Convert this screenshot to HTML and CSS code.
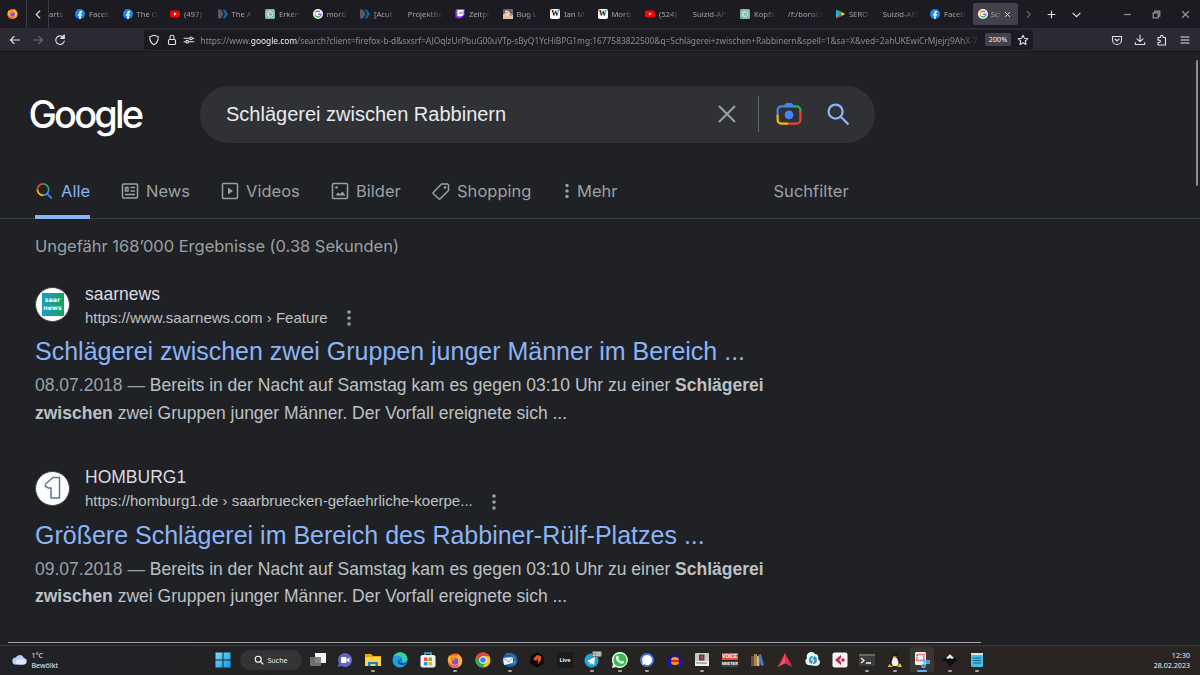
FILE: index.html
```html
<!DOCTYPE html>
<html lang="de">
<head>
<meta charset="utf-8">
<title>Schlägerei zwischen Rabbinern - Google Suche</title>
<link rel="stylesheet" href="styles.css">
</head>
<body>
<svg class="defs" aria-hidden="true">
  <symbol id="fb" viewBox="0 0 20 20"><circle cx="10" cy="10" r="10" fill="#168af5"/><path d="M8.500 20v-7H6v-3h2.500V8c0-2.700 1.500-4 3.800-4l2 .2v2.600h-1.300c-1.200 0-1.500.7-1.500 1.500V10h2.800l-.5 3h-2.300v7z" fill="#fff"/></symbol>
  <symbol id="yt" viewBox="0 0 20 20"><rect y="3" width="20" height="14" rx="4" fill="#f00"/><path d="M8 7l5.500 3L8 13z" fill="#fff"/></symbol>
  <symbol id="dbl" viewBox="0 0 20 20"><path d="M0 1h6l5 9-5 9H0z" fill="#565b66"/><path d="M9 1h5l6 9-6 9H9l5-9z" fill="#17619f"/></symbol>
  <symbol id="gpt" viewBox="0 0 20 20"><rect width="20" height="20" rx="3" fill="#84b8a8"/><g fill="none" stroke="#d4e8e1" stroke-width="1"><circle cx="10" cy="10" r="6"/><path d="M5 7l5-3 5 3v6l-5 3-5-3zM7 5v6l6 4M13 5L7 9v6M15 9l-5-3"/></g></symbol>
  <symbol id="goog" viewBox="0 0 20 20"><circle cx="10" cy="10" r="10" fill="#fff"/><g fill="none" stroke-width="2.600"><path d="M14.300 6A6 6 0 0 0 4.800 7" stroke="#ea4335"/><path d="M4.800 7a6 6 0 0 0 0 6" stroke="#fbbc05"/><path d="M4.800 13a6 6 0 0 0 9 1.600" stroke="#34a853"/><path d="M13.800 14.600A6 6 0 0 0 16 10.500H10" stroke="#4285f4"/></g></symbol>
  <symbol id="twitch" viewBox="0 0 20 20"><path d="M3 0h16v12l-6 6H9l-3 2v-3H1V4z" fill="#8b45f6"/><path d="M5 2h12v9l-3 3h-4l-2 2v-2H5z" fill="#fff"/><path d="M9 5h2v5H9zM13 5h2v5h-2z" fill="#8b45f6"/></symbol>
  <symbol id="bug" viewBox="0 0 20 20"><rect width="20" height="20" rx="2" fill="#71617b"/><path d="M0 11l7-4 13 5v8H0z" fill="#e0c0a7"/><path d="M4 4l5-1 5 4-2 8-7-2z" fill="#f0d5b1"/><path d="M6 7h3M13 13h4" stroke="#8c6f7c" stroke-width="1.500"/></symbol>
  <symbol id="play" viewBox="0 0 20 20"><path d="M2 1v18l9-9z" fill="#19b6f1"/><path d="M2 1l9 9 4-3.500z" fill="#31b85b"/><path d="M2 19l9-9 4 3.500z" fill="#eb4639"/><path d="M15 6.500L11 10l4 3.500 5-3.500z" fill="#fbc52d"/></symbol>
  <symbol id="ffox" viewBox="0 0 20 20"><circle cx="10" cy="11" r="9" fill="#ff6b26"/><path d="M12 0c0 3 7 4 7 11a9 9 0 0 1-18 0c0-4 1-5 2-7l2 2c2-2 5-1 5 0 3 0 4-3 2-6z" fill="#ffb52b"/><path d="M1 9c0 4 2 4 3 6 3 3 8 3 11 0-1 3-4 5-7 4-4-1-7-4-7-10z" fill="#f2315f"/><circle cx="10" cy="11.500" r="4.300" fill="#7854dc"/><path d="M4 7c3-1 5 0 7 2-2 1-3 1-4 3-2-1-3-3-3-5z" fill="#ff7c25"/></symbol>
</svg>

<div class="tabstrip">
  <div class="pinned"><svg><use href="#ffox"/></svg></div>
  <div class="scroll-left"><svg viewBox="0 0 10 10"><path d="M6.500 1.500L3 5l3.500 3.500" /></svg></div>
  <div class="tab cut"><span>arts</span></div>
  <div class="tab"><svg class="fav"><use href="#fb"/></svg><span>Faceb</span></div>
  <div class="tab"><svg class="fav"><use href="#fb"/></svg><span>The O</span></div>
  <div class="tab"><svg class="fav"><use href="#yt"/></svg><span>(497)</span></div>
  <div class="tab"><svg class="fav"><use href="#dbl"/></svg><span>The A</span></div>
  <div class="tab"><svg class="fav"><use href="#gpt"/></svg><span>Erken</span></div>
  <div class="tab"><svg class="fav"><use href="#goog"/></svg><span>morb</span></div>
  <div class="tab"><svg class="fav"><use href="#dbl"/></svg><span>[Acut</span></div>
  <div class="tab"><span>ProjektBe</span></div>
  <div class="tab"><svg class="fav"><use href="#twitch"/></svg><span>Zeitpl</span></div>
  <div class="tab"><svg class="fav"><use href="#bug"/></svg><span>Bug L</span></div>
  <div class="tab"><i class="wiki">W</i><span>Ian M</span></div>
  <div class="tab"><i class="wiki">W</i><span>Morb</span></div>
  <div class="tab"><svg class="fav"><use href="#yt"/></svg><span>(524)</span></div>
  <div class="tab"><span>Suizid-API</span></div>
  <div class="tab"><svg class="fav"><use href="#gpt"/></svg><span>Kopfs</span></div>
  <div class="tab"><span>/f:/bonsi.t</span></div>
  <div class="tab"><svg class="fav"><use href="#play"/></svg><span>SERO</span></div>
  <div class="tab"><span>Suizid-API</span></div>
  <div class="tab"><svg class="fav"><use href="#fb"/></svg><span>Faceb</span></div>
  <div class="tab active"><svg class="fav"><use href="#goog"/></svg><span>Sch</span><svg class="close" viewBox="0 0 6 6"><path d="M1 1l4 4M5 1L1 5"/></svg></div>
  <div class="tabtools">
    <svg class="dim" viewBox="0 0 10 10"><path d="M3.500 2L6.500 5l-3 3"/></svg>
    <svg viewBox="0 0 10 10"><path d="M5 1.500v7M1.500 5h7"/></svg>
    <svg viewBox="0 0 10 10"><path d="M1.500 3.500L5 7l3.500-3.500"/></svg>
  </div>
  <div class="wincontrols">
    <svg viewBox="0 0 10 10"><path d="M2 5h6"/></svg>
    <svg viewBox="0 0 10 10"><path d="M2 3.500h4.500V8H2zM3.500 3.500V2H8v4.500H6.500"/></svg>
    <svg viewBox="0 0 10 10"><path d="M2 2l6 6M8 2L2 8"/></svg>
  </div>
</div>

<div class="toolbar">
  <div class="navbuttons">
    <svg viewBox="0 0 12 12"><path d="M10.500 6h-9M5 2.500L1.500 6 5 9.500"/></svg>
    <svg class="dim" viewBox="0 0 12 12"><path d="M1.500 6h9M7 2.500L10.500 6 7 9.500"/></svg>
    <svg viewBox="0 0 12 12"><path d="M9.300 3.300A4.300 4.300 0 1 0 10.300 7M10.300 1v3.500H6.800z"/></svg>
  </div>
  <div class="urlbar">
    <svg viewBox="0 0 12 12"><path d="M6 1.300l4.300 1.500c0 4-1.200 6.500-4.300 8C2.900 9.300 1.700 6.800 1.700 2.800z"/></svg>
    <svg viewBox="0 0 12 12"><rect x="2.500" y="5.500" width="7" height="5" rx="1"/><path d="M4 5.500V3.300a2 2 0 0 1 4 0v2.200"/></svg>
    <svg class="perm" viewBox="0 0 12 12"><path d="M1 4.300h5M9.500 4.300H11M1 7.700h1.500M6 7.700h5"/><circle cx="8" cy="4.300" r="1.300"/><circle cx="4.200" cy="7.700" r="1.300"/></svg>
    <div class="url">https://www.<b>google.com</b>/search?client=firefox-b-d&amp;sxsrf=AJOqlzUrPbuG00uVTp-sByQ1YcHiBPG1mg:1677583822500&amp;q=Schlägerei+zwischen+Rabbinern&amp;spell=1&amp;sa=X&amp;ved=2ahUKEwiCrMjejrj9AhX-7</div>
    <span class="zoomlevel">200%</span>
    <svg viewBox="0 0 12 12"><path d="M6 1.200l1.400 3.100 3.500.4-2.600 2.300.7 3.400-3-1.700-3 1.700.7-3.400L1.100 4.700l3.500-.4z"/></svg>
  </div>
  <div class="actions">
    <svg viewBox="0 0 12 12"><path d="M1.500 2.500h9V6a4.500 4.500 0 0 1-9 0zM4 5l2 2 2-2"/></svg>
    <svg viewBox="0 0 12 12"><path d="M6 1v6.500M3 4.800l3 2.900 3-2.900M1.300 8.500v2h9.400v-2"/></svg>
    <svg viewBox="0 0 12 12"><path d="M2 3.500h2.500V2.700a1.300 1.300 0 0 1 2.600 0v.8H9.500V11H2V8.500h1.200a1.200 1.200 0 0 0 0-2.400H2z"/></svg>
    <svg viewBox="0 0 12 12"><path d="M2 3h8M2 6h8M2 9h8"/></svg>
  </div>
</div>

<main class="page">
  <header class="head">
    <div class="logo">Google</div>
    <div class="searchbox">
      <div class="query">Schlägerei zwischen Rabbinern</div>
      <svg class="clear" viewBox="0 0 18 18"><path d="M1 1l16 16M17 1L1 17"/></svg>
      <i class="sep"></i>
      <svg class="lens" viewBox="0 0 26 24" fill="none" stroke-width="2.200"><path d="M8.500 4.200l1.500-2.600h6l1.500 2.600z" fill="#4285f4" stroke="#4285f4" stroke-width="1"/><path d="M1.600 12.500V8a3.600 3.600 0 0 1 3.600-3.600H19" stroke="#4285f4"/><path d="M18 4.400h2.800A3.600 3.600 0 0 1 24.400 8v2" stroke="#34a853"/><path d="M24.400 9v9a3.600 3.600 0 0 1-3.600 3.600H12" stroke="#ea4335"/><path d="M12 21.600H5.200A3.600 3.600 0 0 1 1.600 18v-5.500" stroke="#fbbc04"/><circle cx="13" cy="12.800" r="4.400" fill="#4285f4"/></svg>
      <svg class="glass" viewBox="0 0 23 23"><circle cx="8.600" cy="8.600" r="7"/><path d="M13.500 13.500l8 8"/></svg>
    </div>
  </header>

  <nav class="modes">
    <a class="mode on"><svg viewBox="0 0 18 18"><path d="M2.500 4.200A6 6 0 0 1 7.500 1.500" stroke="#ea4335"/><path d="M7.500 1.500a6 6 0 0 1 6 6" stroke="#34a853"/><path d="M3 3.600a6 6 0 0 0-1.500 3.900" stroke="#ea4335"/><path d="M1.500 7.500a6 6 0 0 0 6 6" stroke="#fbbc04"/><path d="M7.500 13.500a6 6 0 0 0 6-6M11.700 11.700l5 5" stroke="#4285f4"/></svg><span>Alle</span></a>
    <a class="mode news"><svg viewBox="0 0 18 18"><rect x="1.500" y="2" width="15" height="14" rx="1"/><path d="M9.500 5.500H14M9.500 9H14M4 12.500h10"/><rect x="4.500" y="5.500" width="2.500" height="3.500"/></svg><span>News</span></a>
    <a class="mode videos"><svg viewBox="0 0 18 18"><rect x="1.500" y="1.500" width="15" height="15" rx="1"/><path d="M7 5.500v7l5-3.500z" class="solid"/></svg><span>Videos</span></a>
    <a class="mode bilder"><svg viewBox="0 0 18 18"><rect x="1.500" y="1.500" width="15" height="15" rx="1"/><circle cx="5.500" cy="5.500" r="1.300" class="solid"/><path d="M4.500 13.500l2.500-3 2 1.500 2.500-2.500 3 4z" class="solid"/></svg><span>Bilder</span></a>
    <a class="mode shop"><svg viewBox="0 0 18 18"><path d="M1.300 10.500L9.500 2h6l1 1v5.500l-8.200 8.300q-.7.700-1.400 0L1.300 11.800q-.6-.6 0-1.300z"/><circle cx="13" cy="5.500" r="1.300" class="solid"/></svg><span>Shopping</span></a>
    <a class="mode more"><svg viewBox="0 0 4 16"><g class="solid"><circle cx="2" cy="2.500" r="1.700"/><circle cx="2" cy="8" r="1.700"/><circle cx="2" cy="13.500" r="1.700"/></g></svg><span>Mehr</span></a>
    <a class="mode filter"><span>Suchfilter</span></a>
  </nav>

  <p class="stats">Ungefähr 168’000 Ergebnisse (0.38 Sekunden)</p>

  <article class="result">
    <div class="source">
      <div class="badge"><div class="saar"><span>saar</span><span>news</span></div></div>
      <div class="site"><div class="name">saarnews</div><div class="path">https://www.saarnews.com › Feature<svg class="dots" viewBox="0 0 4 16"><circle cx="2" cy="2" r="1.800"/><circle cx="2" cy="8" r="1.800"/><circle cx="2" cy="14" r="1.800"/></svg></div></div>
    </div>
    <h3>Schlägerei zwischen zwei Gruppen junger Männer im Bereich ...</h3>
    <p class="snippet"><span>08.07.2018 — </span>Bereits in der Nacht auf Samstag kam es gegen 03:10 Uhr zu einer <b>Schlägerei</b><br><b>zwischen</b> zwei Gruppen junger Männer. Der Vorfall ereignete sich ...</p>
  </article>

  <article class="result">
    <div class="source">
      <div class="badge"><svg class="one" viewBox="0 0 18 24"><path d="M15.500 1.500H9L1.500 8v2.500l3 1.500h2.500v10h8.500z"/></svg></div>
      <div class="site"><div class="name">HOMBURG1</div><div class="path">https://homburg1.de › saarbruecken-gefaehrliche-koerpe...<svg class="dots" viewBox="0 0 4 16"><circle cx="2" cy="2" r="1.800"/><circle cx="2" cy="8" r="1.800"/><circle cx="2" cy="14" r="1.800"/></svg></div></div>
    </div>
    <h3>Größere Schlägerei im Bereich des Rabbiner-Rülf-Platzes ...</h3>
    <p class="snippet"><span>09.07.2018 — </span>Bereits in der Nacht auf Samstag kam es gegen 03:10 Uhr zu einer <b>Schlägerei</b><br><b>zwischen</b> zwei Gruppen junger Männer. Der Vorfall ereignete sich ...</p>
  </article>
  <i class="scrollthumb"></i>
  <i class="hscroll"></i>
</main>

<footer class="taskbar">
  <div class="weather">
    <svg viewBox="0 0 16 11"><path d="M4 10.500a3.500 3.500 0 0 1-.3-7A4.500 4.500 0 0 1 12 4a3.300 3.300 0 0 1 0 6.500z" fill="#b6cdf5"/><path d="M5 10.500a3 3 0 0 1 0-5c3-.8 4 1 7-.5a3 3 0 0 1 0 5.500z" fill="#dce8fc"/></svg>
    <div>1°C<br>Bewölkt</div>
  </div>
  <svg class="start" viewBox="0 0 16 16"><defs><linearGradient id="win" x2="1" y2="1"><stop stop-color="#75e0fb"/><stop offset="1" stop-color="#1098ee"/></linearGradient></defs><path d="M.5.500h7v7h-7zM8.500.500h7v7h-7zM.5 8.500h7v7h-7zM8.500 8.500h7v7h-7z" fill="url(#win)"/></svg>
  <div class="pill"><svg viewBox="0 0 10 10"><circle cx="4.200" cy="4.200" r="3"/><path d="M6.500 6.500L9.300 9.300"/></svg>Suche</div>
  <div class="apps">
    <div class="app"><svg viewBox="0 0 16 16"><path d="M5 1h11v10H5z" fill="#f2f2f2"/><path d="M0 5h11v9H0z" fill="#777" opacity=".9"/></svg></div>
    <div class="app"><svg viewBox="0 0 16 16"><path d="M8 1a7 7 0 1 1-3.500 13L1 15l.8-4A7 7 0 0 1 8 1z" fill="#6264c7"/><rect x="4" y="5" width="5.500" height="6" rx="1" fill="#fff"/><path d="M10 7.500L12.500 5.500v5L10 8.800z" fill="#fff"/></svg></div>
    <div class="app run"><svg viewBox="0 0 16 16"><path d="M0 2h6l2 2h8v10H0z" fill="#eaa80f"/><path d="M0 5h16v9H0z" fill="#ffd24d"/><path d="M3 10h10v4H3z" fill="#1580c9"/><path d="M5.500 12h5v2h-5z" fill="#ffd24d"/></svg></div>
    <div class="app"><svg viewBox="0 0 16 16"><circle cx="8" cy="8" r="7.500" fill="#127dd3"/><path d="M1 5C4-2 15-1 15.500 7c0 3-3 4-6 3 2-4-1-6-4-6-2 0-3.500 0-4.500 1z" fill="#3dcda0"/><path d="M1 6c3-4 8-2 8 1-4-1-5 5 1 6l4-.5C9 18-1 15 1 6z" fill="#1aa2e8"/><path d="M7 8c0 4 4 4 7 3-2 3-8 2-8-1z" fill="#163b6d"/></svg></div>
    <div class="app"><svg viewBox="0 0 16 16"><path d="M5 4V1h6v3" fill="none" stroke="#3bb3ef" stroke-width="1.500"/><rect x=".5" y="3" width="15" height="12.500" rx="2" fill="#eef2f6"/><path d="M4 5.500h3.500V9H4z" fill="#ef4f30"/><path d="M8.500 5.500H12V9H8.500z" fill="#7cb928"/><path d="M4 10h3.500v3.500H4z" fill="#16a0e7"/><path d="M8.500 10H12v3.500H8.500z" fill="#f6b51b"/></svg></div>
    <div class="app run"><svg><use href="#ffox"/></svg></div>
    <div class="app"><svg viewBox="0 0 16 16"><circle cx="8" cy="8" r="7.500" fill="#fbc51b"/><path d="M1.500 4.200A7.500 7.500 0 0 1 14.500 4.300H8L4.800 10z" fill="#e84436"/><path d="M1.500 4.200A7.500 7.500 0 0 0 7.500 15.500L11 10H4.800z" fill="#32a853"/><circle cx="8" cy="8" r="3.700" fill="#fff"/><circle cx="8" cy="8" r="2.800" fill="#3e82ee"/></svg></div>
    <div class="app run"><svg viewBox="0 0 16 16"><path d="M3 2c5-3 12-1 12.500 6C16 14 9 17 4 14l-4-4z" fill="#1e5fa8"/><path d="M3 1c6 0 9 3 10 7l-2 5c4-1 3-8-1-10z" fill="#58a6e6"/><path d="M1 6l10-1v6l-9 2z" fill="#eef3f9"/><path d="M1 6l6 4 4-5" fill="none" stroke="#89a4c5"/></svg></div>
    <div class="app"><svg viewBox="0 0 16 16"><path d="M8 .5l6.500 3.700v7.600L8 15.500l-6.500-3.700V4.200z" fill="#080808"/><path d="M4 7l4-4 4 1v4l-3 4V7L7 9z" fill="#e4532a"/></svg></div>
    <div class="app"><span class="live">Live</span></div>
    <div class="app run"><svg viewBox="0 0 16 16"><circle cx="7.500" cy="8.500" r="7" fill="#26a2db"/><path d="M3 9l8-4-1 8-3-2-1 2-.5-3z" fill="#fff"/></svg><span class="count">198</span></div>
    <div class="app run"><svg viewBox="0 0 16 16"><path d="M8 0a8 8 0 1 1-4 15L0 16l1-4A8 8 0 0 1 8 0z" fill="#eefbee"/><circle cx="8" cy="8" r="6.600" fill="#36bd50"/><path d="M5 4c2-1 2 2 1.500 2.500C7 8 8 9 9.500 9.500c1-1 3 0 2.500 1C10 14 3 9 4 5z" fill="#fff"/></svg></div>
    <div class="app run"><svg viewBox="0 0 16 16"><circle cx="8" cy="8" r="6.500" fill="#3a76f0" stroke="#6c9bfa" stroke-dasharray="1.500 .7"/><path d="M8 3a5 5 0 1 1-2.500 9.200l-2.500.6.700-2.400A5 5 0 0 1 8 3z" fill="#fff"/></svg></div>
    <div class="app"><svg viewBox="0 0 16 16"><path d="M2.500 9a5.500 6 0 0 1 11 0" fill="none" stroke="#12149e" stroke-width="2"/><path d="M0 8h4v7H2zM12 8h4l-2 7h-2z" fill="#111cc2"/><rect x="4" y="5" width="8" height="8" rx="3.500" fill="#ff961c"/><path d="M4 9h8" stroke="#cf261e" stroke-width="2"/></svg></div>
    <div class="app run"><svg viewBox="0 0 16 16"><rect x="1" y="1" width="14" height="13" rx="1" fill="#c8c8c8"/><path d="M1 9h14v5H1z" fill="#ededed"/><rect x="5" y="2.500" width="5.500" height="6" fill="#514649"/><path d="M7 4h2v3H7z" fill="#c83b46"/><path d="M2 11h11" stroke="#737373"/></svg></div>
    <div class="app"><div class="vm"><span>VOICE</span><span>MEETER</span></div></div>
    <div class="app"><svg viewBox="0 0 16 16"><path d="M2 4h3v10H2z" fill="#6a5037"/><path d="M5 2h3v12H5z" fill="#a98343"/><path d="M8 4h2.500v10H8z" fill="#caba8d"/><path d="M9 3l3-1 3 11-3 1z" fill="#4978ba"/></svg></div>
    <div class="app"><svg viewBox="0 0 16 16"><path d="M8 1l7.500 14L8 11.500.5 15z" fill="#cf3346"/><path d="M8 1l-3 9-4.500 5 7.500-4z" fill="#f05468"/></svg></div>
    <div class="app"><svg viewBox="0 0 16 16"><path d="M4 13a4 4 0 0 1-1-7A4.500 4.500 0 0 1 11 2c3 0 4 3 3 5 4 3 1 7-2 7z" fill="#dff3fa"/><circle cx="9" cy="8" r="4" fill="#3997bc"/><path d="M10 4L7 8h3l-2 4" stroke="#fff" fill="none"/></svg></div>
    <div class="app"><svg viewBox="0 0 16 16"><rect x=".5" y=".5" width="15" height="15" rx="2" fill="#f6f4f5"/><path d="M3 8l6-5v3L7 8l2 2v3z" fill="#c02346"/><circle cx="11" cy="8" r="1.700" fill="#c02346"/></svg></div>
    <div class="app run"><svg viewBox="0 0 16 16"><rect y="2" width="16" height="12" rx="1" fill="#3c3c3f"/><path d="M0 2h16v2H0z" fill="#67676a"/><path d="M2 6l3 2.500L2 11M7 11h5" fill="none" stroke="#f4f4f4" stroke-width="1.300"/></svg></div>
    <div class="app run"><svg viewBox="0 0 16 16"><path d="M6 1h4c1 5 4 7 3 12H4C2 9 5 6 6 1z" fill="#171b24"/><path d="M6 5l4 1c2 5 2 6 0 8H6c-3-4 0-6 0-9z" fill="#f5f1e7"/><path d="M2 12l4 3H1zM10 15l3-4 2 4z" fill="#f5b921"/><path d="M6 4l4 .5L8 6z" fill="#f5b921"/></svg></div>
    <div class="app current"><svg viewBox="0 0 16 16"><rect x="1" y="0" width="11" height="13" rx="1.500" fill="#f4f4f6"/><rect x="3" y="2.500" width="7" height="6" fill="none" stroke="#db3943" stroke-width="1.500" stroke-dasharray="1.500 .7"/><g fill="none" stroke="#4bb1ee" stroke-width="1.500"><circle cx="9.500" cy="14" r="1.500"/><circle cx="14" cy="10" r="1.500"/><path d="M8 8l5 2M10 13l1-5"/></g></svg></div>
    <div class="app run"><svg viewBox="0 0 16 16"><path d="M8 1l7 7c0 2-3 1-4 2l1 1-4 4-3-4 1-1C5 9 0 10 1 8z" fill="#0b0c0e"/><path d="M8 2l4 4-2 1-2-1-2 1-2-1z" fill="#e2e9ef"/></svg></div>
    <div class="app run"><svg viewBox="0 0 16 16"><rect x="2" y="2" width="12" height="13" rx="1" fill="#42bfe7"/><path d="M2 1h12v2H2z" fill="#d4e4ea"/><path d="M4 6h8M4 8.500h8M4 11h8" stroke="#126788" stroke-width="1.200"/></svg></div>
  </div>
  <div class="clock">12:30<br>28.02.2023</div>
</footer>
</body>
</html>
```

FILE: styles.css
```css
* { box-sizing: border-box; }
body {
  margin: 0;
  width: 1200px;
  height: 675px;
  overflow: hidden;
  display: flex;
  flex-direction: column;
  background: #202124;
  color: #bdc1c6;
  font-family: "Liberation Sans", Arial, sans-serif;
}
svg { display: block; flex: none; }
.defs { position: absolute; width: 0; height: 0; }

/* browser chrome */
.tabstrip {
  height: 28px;
  flex: none;
  display: flex;
  align-items: center;
  background: #1c1b22;
  font: 7.7px/12px "Noto Sans", sans-serif;
  color: #a5a4ab;
}
.fav { width: 10px; height: 10px; }
.wiki { width: 10px; height: 10px; flex: none; border-radius: 2px; background: #fff; color: #111; font: 700 8px/10px "Liberation Serif", serif; text-align: center; }
.pinned { width: 27px; height: 28px; display: flex; align-items: center; justify-content: center; border-right: 1px solid #3b3a43; padding: 0 1px 1px 0; }
.pinned svg { width: 11px; height: 11px; }
.scroll-left { width: 22px; height: 28px; display: flex; align-items: center; justify-content: center; border-right: 1px solid #3b3a43; padding-left: 2px; }
.scroll-left svg, .tabtools svg, .wincontrols svg { width: 11px; height: 11px; fill: none; stroke: #e4e3e9; stroke-width: 1.1; }
.tab { width: 47.5px; flex: none; height: 22px; padding: 0 7px 0 4.8px; display: flex; align-items: center; gap: 3.6px; }
.tab span { flex: 1; min-width: 0; overflow: hidden; white-space: nowrap; -webkit-mask-image: linear-gradient(90deg, #000 50%, transparent 100%); mask-image: linear-gradient(90deg, #000 50%, transparent 100%); }
.tab.cut { width: 21.5px; padding: 0 6px 0 0; }
.tab.active { width: 45px; gap: 3px; background: #42414d; border-radius: 2px; padding-right: 7px; }
.tab.active .close { width: 7px; height: 7px; fill: none; stroke: #e6e5eb; stroke-width: .8; }
.tabtools { display: flex; align-items: center; margin-left: 5px; }
.tabtools .dim { margin-right: 12px; }
.tabtools svg + svg + svg { margin-left: 14px; }
.tabtools .dim, .toolbar .dim { opacity: .35; }
.wincontrols { display: flex; gap: 18px; margin-left: auto; padding-right: 9px; opacity: .6; }

.toolbar { height: 24px; flex: none; display: flex; align-items: center; background: #2b2a33; border-bottom: 1px solid #131218; }
.toolbar svg { width: 12px; height: 12px; fill: none; stroke: #e0dfe6; stroke-width: 1.1; stroke-linejoin: round; stroke-linecap: round; }
.navbuttons { width: 144px; display: flex; gap: 11px; padding-left: 8.5px; }
.navbuttons svg:last-child { margin-left: -1px; }
.urlbar { width: 889px; height: 20px; border-radius: 2px; background: #1c1b22; display: flex; align-items: center; gap: 5.5px; padding-left: 4px; }
.urlbar .url { width: 781px; height: 14px; overflow: hidden; white-space: nowrap; font: 8.4px/15px "Noto Sans", sans-serif; letter-spacing: -.02px; color: #8b8a92; -webkit-mask-image: linear-gradient(90deg, #000 97%, transparent); mask-image: linear-gradient(90deg, #000 97%, transparent); }
.url b { font-weight: 400; color: #f0f0f4; }
.zoomlevel { width: 26px; height: 13px; margin-left: -2px; border-radius: 2px; background: #42414d; color: #f0f0f4; font: 7.2px/13px "Noto Sans", sans-serif; text-align: center; }
.actions { display: flex; gap: 10.6px; margin-left: auto; padding-right: 9px; }

/* results page */
.page { position: relative; height: 593px; flex: none; display: flex; flex-direction: column; }
.head { display: flex; align-items: center; padding-top: 34px; height: 91px; }
.logo { width: 200px; padding: 0 0 2px 28.5px; font: 500 38px/46px Inter, sans-serif; letter-spacing: -2.85px; color: #fff; }
.searchbox { width: 675px; height: 57px; border-radius: 29px; background: #303134; display: flex; align-items: center; padding: 0 0 1px 26px; }
.query { width: 492px; padding-bottom: 1px; font-size: 20px; line-height: 26px; color: #e8eaed; }
.clear { width: 18px; height: 18px; fill: none; stroke: #9aa0a6; stroke-width: 2; }
.sep { width: 1px; height: 36px; margin: 0 17px 0 21.5px; background: #5f6368; }
.lens { width: 26px; height: 24px; }
.glass { width: 23px; height: 23px; margin-left: 25px; fill: none; stroke: #8ab4f8; stroke-width: 2.3; }

.modes { display: flex; height: 76px; padding: 20px 0 0 35px; border-bottom: 1px solid #3c4043; font: 16.500px/56px Inter, sans-serif; letter-spacing: .02px; color: #9aa0a6; }
.mode { height: 56px; display: flex; align-items: center; gap: 7px; white-space: nowrap; }
.mode svg { width: 18px; height: 18px; fill: none; stroke: #9aa0a6; stroke-width: 1.5; }
.mode .solid { fill: #9aa0a6; stroke: none; }
.mode svg path:not(.solid)[stroke] { stroke-width: 1.900; }
.on { width: 55px; color: #8ab4f8; border-bottom: 4px solid #8ab4f8; padding-top: 3px; gap: 8px; }
.on svg { margin-left: 1px; width: 17px; }
.news { margin-left: 31px; width: 69px; }
.videos { margin-left: 31px; width: 79px; }
.bilder { margin-left: 31px; width: 70px; }
.shop { margin-left: 31px; width: 100px; }
.more { margin-left: 33px; width: 53px; gap: 8px; }
.more svg { width: 4px; height: 16px; }
.filter { margin-left: 155.500px; }
.stats { margin: 13px 0 1px 35px; font: 16.500px/28px Inter, sans-serif; letter-spacing: -.02px; color: #9aa0a6; }
.result { height: 183.500px; padding: 20.500px 0 0 35px; flex: none; }
.source { display: flex; height: 49.700px; }
.badge { width: 35px; height: 35px; margin: 5.500px 15px 0 0; border-radius: 50%; background: #fff; border: 1px solid #3c4043; display: flex; align-items: center; justify-content: center; }
.saar { width: 22px; height: 23px; background: linear-gradient(90deg, #169fc9, #18a45c); color: #fff; font: 700 6.300px/8px "DejaVu Sans", sans-serif; padding-top: 3px; display: flex; flex-direction: column; align-items: center; }
.one { width: 18px; height: 24px; fill: #fff; stroke: #58779c; stroke-width: 1.5; }
.name { font-size: 17.500px; line-height: 24px; color: #dadce0; }
.path { display: flex; align-items: center; font-size: 15px; line-height: 24px; color: #bdc1c6; }
.dots { width: 4px; height: 16px; margin: 1px 0 0 19px; fill: #9aa0a6; }
h3 { margin: 0; font-size: 25px; font-weight: 400; line-height: 41px; color: #8ab4f8; white-space: nowrap; }
.snippet { margin: 0; font-size: 17.500px; line-height: 27.650px; white-space: nowrap; }
.snippet span { color: #9aa0a6; }
.scrollthumb { position: absolute; left: 1196px; top: 8px; width: 2px; height: 126px; background: #8d8d90; border-radius: 1px; }
.hscroll { position: absolute; left: 8px; top: 590px; width: 973px; height: 1px; background: #a2a2a4; }

/* desktop taskbar */
.taskbar { height: 30px; flex: none; display: flex; align-items: center; padding-bottom: 2px; background: linear-gradient(90deg, #202126, #262423 45%, #2b2522); border-top: 1px solid #3c3b3b; color: #eee; font: 7.1px/10px "Noto Sans", sans-serif; }
.weather { width: 215px; display: flex; align-items: center; gap: 4px; padding-left: 11.500px; }
.weather svg { width: 16px; height: 11px; }
.start { width: 16px; height: 16px; }
.pill { width: 62px; height: 20px; margin-left: 9px; border-radius: 10px; background: #343335; display: flex; align-items: center; justify-content: center; gap: 3px; }
.pill svg { width: 10px; height: 10px; fill: none; stroke: #fff; stroke-width: 1.1; }
.apps { display: flex; margin-left: 2px; }
.app { position: relative; width: 27.480px; height: 27px; display: flex; align-items: center; justify-content: center; }
.app svg { width: 16px; height: 16px; }
.app.run::after, .app.current::after { content: ""; position: absolute; bottom: 1px; width: 4px; height: 2px; background: #a5a5a5; border-radius: 1px; }
.app.current::before { content: ""; position: absolute; inset: 1px 1.500px; border-radius: 2px; background: rgba(255, 255, 255, .08); }
.app.current::after { width: 10px; background: #60b6ea; }
.live { font: 700 5.500px/16px "Noto Sans", sans-serif; width: 16px; height: 16px; background: #1b1b1c; text-align: center; }
.count { position: absolute; left: 13px; top: 5px; width: 10px; height: 6px; border-radius: 2px; background: #747b80; color: #fff; font: 5px/6px "Liberation Sans", sans-serif; text-align: center; }
.vm { width: 16px; display: flex; flex-direction: column; gap: 1px; color: #fff; font: 700 4.800px/7px "Liberation Sans", sans-serif; text-align: center; }
.vm span { background: #e8483c; }
.vm span + span { background: #33464e; font-size: 3.900px; line-height: 6px; }
.clock { margin-left: auto; padding: 1px 10px 0 0; text-align: right; font-size: 7.1px; }
```
